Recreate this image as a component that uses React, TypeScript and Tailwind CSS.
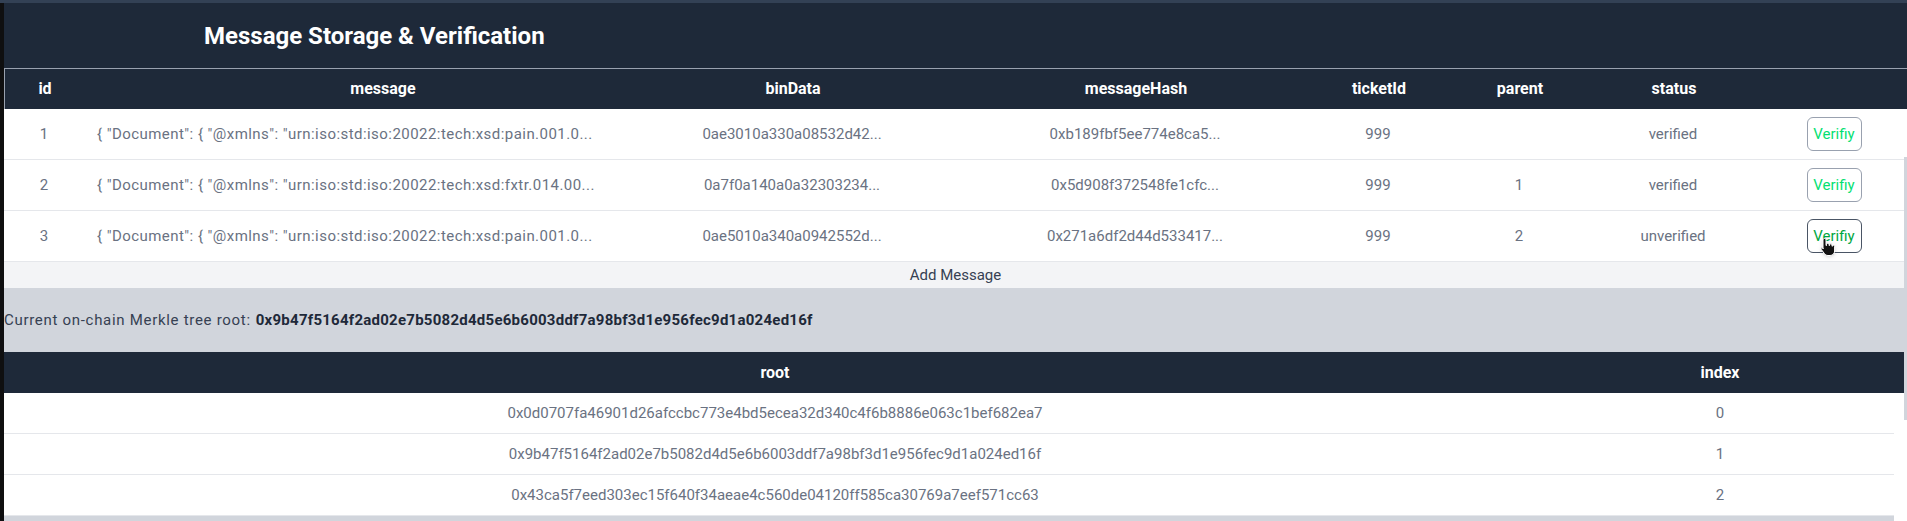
import React from "react";

interface MessageRow {
  id: number;
  message: string;
  binData: string;
  messageHash: string;
  ticketId: number;
  parent: string;
  status: "verified" | "unverified";
}

interface RootRow {
  root: string;
  index: number;
}

const messages: MessageRow[] = [
  {
    id: 1,
    message: '{ "Document": { "@xmlns": "urn:iso:std:iso:20022:tech:xsd:pain.001.0...',
    binData: "0ae3010a330a08532d42...",
    messageHash: "0xb189fbf5ee774e8ca5...",
    ticketId: 999,
    parent: "",
    status: "verified",
  },
  {
    id: 2,
    message: '{ "Document": { "@xmlns": "urn:iso:std:iso:20022:tech:xsd:fxtr.014.00...',
    binData: "0a7f0a140a0a32303234...",
    messageHash: "0x5d908f372548fe1cfc...",
    ticketId: 999,
    parent: "1",
    status: "verified",
  },
  {
    id: 3,
    message: '{ "Document": { "@xmlns": "urn:iso:std:iso:20022:tech:xsd:pain.001.0...',
    binData: "0ae5010a340a0942552d...",
    messageHash: "0x271a6df2d44d533417...",
    ticketId: 999,
    parent: "2",
    status: "unverified",
  },
];

const roots: RootRow[] = [
  { root: "0x0d0707fa46901d26afccbc773e4bd5ecea32d340c4f6b8886e063c1bef682ea7", index: 0 },
  { root: "0x9b47f5164f2ad02e7b5082d4d5e6b6003ddf7a98bf3d1e956fec9d1a024ed16f", index: 1 },
  { root: "0x43ca5f7eed303ec15f640f34aeae4c560de04120ff585ca30769a7eef571cc63", index: 2 },
];

const currentRoot = "0x9b47f5164f2ad02e7b5082d4d5e6b6003ddf7a98bf3d1e956fec9d1a024ed16f";

const cols = "grid grid-cols-[80px_596px_224px_396px_156px_126px_182px_1fr]";

const HandCursor = () => (
  <svg width="17" height="20" viewBox="0 0 17 20" className="drop-shadow">
    <path
      d="M5.5 1.5c.8 0 1.5.7 1.5 1.5v5.5h.5V7.5c0-.8.6-1.3 1.3-1.3s1.2.5 1.2 1.3v1h.5V8c0-.7.6-1.2 1.2-1.2s1.3.5 1.3 1.2v1.2h.4c0-.6.5-1 1.1-1s1.1.5 1.1 1.1V14c0 2.5-1.8 4.5-4.5 4.5H9c-1.5 0-2.6-.6-3.5-1.8L2.3 12.5c-.4-.6-.3-1.3.2-1.7.5-.4 1.2-.3 1.6.2L4 12V3c0-.8.7-1.5 1.5-1.5z"
      fill="#111"
      stroke="#fff"
      strokeWidth="1"
    />
  </svg>
);

export default function App() {
  return (
    <div
      className="relative w-[1907px] h-[521px] overflow-hidden bg-white"
      style={{ fontFamily: "Roboto, 'Noto Sans', sans-serif" }}
    >
      {/* top strip */}
      <div className="h-[3px] bg-[#334155]" />

      <div className="flex">
        {/* left edge */}
        <div className="w-[4px] h-[518px] bg-[#0f0f10]" />

        <div className="flex-1 flex flex-col">
          {/* Header */}
          <div className="h-[65px] bg-gray-800 flex items-center pl-[200px]">
            <h1 className="text-[24px] font-bold text-white">Message Storage &amp; Verification</h1>
          </div>

          {/* Messages table */}
          <div className={`${cols} h-[41px] bg-gray-800 border-t border-l border-gray-400 text-white font-bold text-[16px]`}>
            <div className="flex items-center justify-center">id</div>
            <div className="flex items-center justify-center">message</div>
            <div className="flex items-center justify-center">binData</div>
            <div className="flex items-center justify-center pl-[66px]">messageHash</div>
            <div className="flex items-center justify-center">ticketId</div>
            <div className="flex items-center justify-center">parent</div>
            <div className="flex items-center justify-center">status</div>
            <div />
          </div>

          {messages.map((m, i) => (
            <div
              key={m.id}
              className={`${cols} h-[51px] border-b border-gray-200 text-[15px] text-gray-500`}
            >
              <div className="flex items-center justify-center">{m.id}</div>
              <div className="flex items-center pl-[13px] whitespace-nowrap tracking-[0.45px]">{m.message}</div>
              <div className="flex items-center justify-center">{m.binData}</div>
              <div className="flex items-center justify-center pl-[66px]">{m.messageHash}</div>
              <div className="flex items-center justify-center">{m.ticketId}</div>
              <div className="flex items-center justify-center">{m.parent}</div>
              <div className="flex items-center justify-center">{m.status}</div>
              <div className="flex items-center justify-center pr-[3px]">
                {i === 2 ? (
                  <button className="relative w-[55px] h-[34px] rounded-md border border-gray-600 text-green-600 text-[15px]">
                    Verifiy
                    <span className="absolute left-[11px] top-[17px]">
                      <HandCursor />
                    </span>
                  </button>
                ) : (
                  <button className="w-[55px] h-[34px] rounded-md border border-gray-400 text-green-400 text-[15px]">
                    Verifiy
                  </button>
                )}
              </div>
            </div>
          ))}

          <button className="h-[26px] bg-gray-100 text-gray-700 text-[15px] flex items-center justify-center">
            Add Message
          </button>

          {/* Merkle root */}
          <div className="h-[64px] bg-gray-300 flex items-center text-gray-700">
            <span className="text-[15px] tracking-[0.7px]">Current on-chain Merkle tree root:</span>
            <span className="ml-[5px] text-[15px] font-bold text-gray-800 tracking-[0.25px]">{currentRoot}</span>
          </div>

          {/* Roots table */}
          <div className="grid grid-cols-[1542px_348px_1fr] h-[41px] bg-gray-800 text-white font-bold text-[16px]">
            <div className="flex items-center justify-center">root</div>
            <div className="flex items-center justify-center">index</div>
            <div />
          </div>
          {roots.map((r) => (
            <div
              key={r.index}
              className="grid grid-cols-[1542px_348px] w-[1890px] h-[41px] border-b border-gray-200 text-[15px] text-gray-500"
            >
              <div className="flex items-center justify-center">{r.root}</div>
              <div className="flex items-center justify-center">{r.index}</div>
            </div>
          ))}
          <div className="w-[1890px] h-[8px] bg-gray-300" />
        </div>
      </div>

      {/* scrollbar thumb */}
      <div className="absolute right-0 top-[157px] w-[3px] h-[263px] bg-gray-300" />
    </div>
  );
}
